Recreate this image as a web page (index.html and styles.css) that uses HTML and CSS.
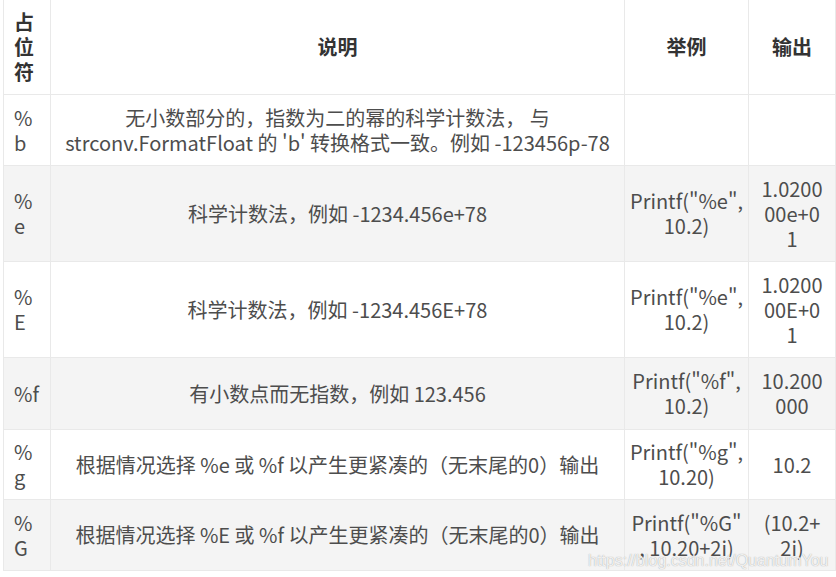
FILE: index.html
```html
<!DOCTYPE html>
<html lang="zh-CN">
<head>
<meta charset="utf-8">
<title>占位符</title>
<link rel="stylesheet" href="styles.css">
</head>
<body>
<div class="wrap">
<table class="fmt">
  <colgroup>
    <col class="c-ph">
    <col class="c-desc">
    <col class="c-ex">
    <col class="c-out">
  </colgroup>
  <thead>
    <tr class="r-head">
      <th class="ph">占位符</th>
      <th>说明</th>
      <th>举例</th>
      <th>输出</th>
    </tr>
  </thead>
  <tbody>
    <tr class="r-b">
      <td class="ph">%b</td>
      <td>无小数部分的，指数为二的幂的科学计数法， 与<br>strconv.FormatFloat 的 'b' 转换格式一致。例如 -123456p-78</td>
      <td class="ex"></td>
      <td class="out"></td>
    </tr>
    <tr class="r-e alt">
      <td class="ph">%e</td>
      <td>科学计数法，例如 -1234.456e+78</td>
      <td class="ex">Printf("%e", 10.2)</td>
      <td class="out">1.020000e+01</td>
    </tr>
    <tr class="r-e">
      <td class="ph">%E</td>
      <td>科学计数法，例如 -1234.456E+78</td>
      <td class="ex">Printf("%e", 10.2)</td>
      <td class="out">1.020000E+01</td>
    </tr>
    <tr class="r-f alt">
      <td class="ph">%f</td>
      <td>有小数点而无指数，例如 123.456</td>
      <td class="ex">Printf("%f", 10.2)</td>
      <td class="out">10.200000</td>
    </tr>
    <tr class="r-g">
      <td class="ph">%g</td>
      <td>根据情况选择 %e 或 %f 以产生更紧凑的（无末尾的0）输出</td>
      <td class="ex">Printf("%g", 10.20)</td>
      <td class="out">10.2</td>
    </tr>
    <tr class="r-gg alt">
      <td class="ph">%G</td>
      <td>根据情况选择 %E 或 %f 以产生更紧凑的（无末尾的0）输出</td>
      <td class="ex">Printf("%G"<br>, 10.20+2i)</td>
      <td class="out">(10.2+2i)</td>
    </tr>
  </tbody>
</table>
<div class="watermark">https://blog.csdn.net/QuantumYou</div>
</div>
</body>
</html>
```

FILE: styles.css
```css
html, body {
  margin: 0;
  padding: 0;
  background: #ffffff;
}

.wrap {
  position: relative;
  width: 836px;
  height: 577px;
  overflow: hidden;
}

.fmt {
  margin-left: 3px;
  width: 832px;
  table-layout: fixed;
  border-collapse: collapse;
  font-family: "Noto Sans CJK SC", "Noto Sans", sans-serif;
  font-size: 20px;
  line-height: 25px;
  color: #4d4d4d;
}

.c-ph { width: 47px; }
.c-desc { width: 574px; }
.c-ex { width: 124px; }
.c-out { width: 87px; }

.fmt th,
.fmt td {
  border: 1px solid #e9e9e9;
  padding: 0 10px;
  text-align: center;
  vertical-align: middle;
  overflow-wrap: anywhere;
}

.fmt th {
  font-weight: 700;
  color: #333333;
  border-top: none;
}

.fmt .ph {
  text-align: left;
  word-break: break-all;
}

.fmt .ex {
  padding: 0 3px;
}

.fmt .out {
  padding: 0 12px;
  word-break: break-all;
}

.alt td {
  background: #f4f4f4;
}

.r-head { height: 94px; }
.r-b { height: 71px; }
.r-e { height: 96px; }
.r-f { height: 72px; }
.r-g { height: 70px; }
.r-gg { height: 71px; }

.watermark {
  position: absolute;
  left: 588px;
  top: 551px;
  font-family: "Liberation Sans", Arial, sans-serif;
  font-size: 16px;
  line-height: 20px;
  color: rgba(255, 255, 255, 0.85);
  text-shadow: 0 0 1px rgba(110, 110, 110, 0.7);
  white-space: nowrap;
}
```
